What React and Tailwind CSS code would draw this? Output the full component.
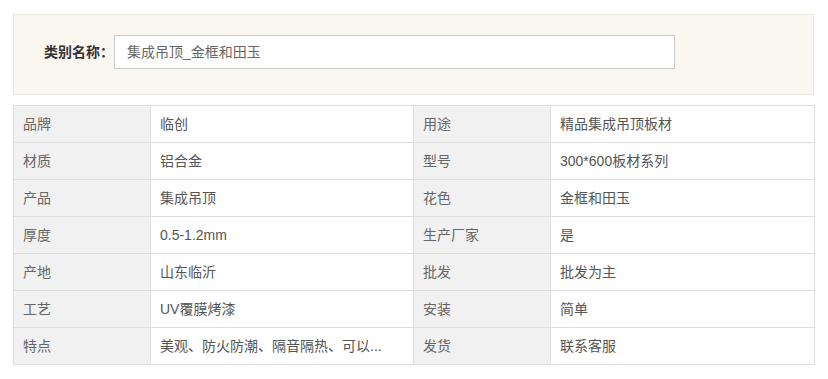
const rows = [
    ['品牌', '临创', '用途', '精品集成吊顶板材'],
    ['材质', '铝合金', '型号', '300*600板材系列'],
    ['产品', '集成吊顶', '花色', '金框和田玉'],
    ['厚度', '0.5-1.2mm', '生产厂家', '是'],
    ['产地', '山东临沂', '批发', '批发为主'],
    ['工艺', 'UV覆膜烤漆', '安装', '简单'],
    ['特点', '美观、防火防潮、隔音隔热、可以...', '发货', '联系客服'],
];

export default function App() {
    return (
        <div
            className="w-[828px] h-[379px] bg-white pt-[14px] pl-[13px] text-[14px]"
            style={{ fontFamily: '"Liberation Sans", "Noto Sans CJK SC", sans-serif' }}
        >
            <div className="w-[801px] border border-[#ebe6de] bg-[#faf7f1] pt-[20px] pb-[25px] pl-[30px] flex items-center">
                <span className="font-bold text-[#333] leading-none">类别名称：</span>
                <div className="w-[561px] h-[34px] border border-[#cccccc] bg-white flex items-center pl-[12px] text-[#666]">
                    集成吊顶_金框和田玉
                </div>
            </div>

            <table className="mt-[10px] w-[801px] border-collapse table-fixed">
                <colgroup>
                    <col className="w-[137px]" />
                    <col className="w-[263px]" />
                    <col className="w-[137px]" />
                    <col className="w-[264px]" />
                </colgroup>
                <tbody>
                    {rows.map((row) => (
                        <tr key={row[0]} className="h-[37px]">
                            <td className="border border-[#dedede] bg-[#f1f1f1] pl-[9px] text-[#666] p-0">{row[0]}</td>
                            <td className="border border-[#dedede] bg-white pl-[9px] text-[#555] p-0">{row[1]}</td>
                            <td className="border border-[#dedede] bg-[#f1f1f1] pl-[9px] text-[#666] p-0">{row[2]}</td>
                            <td className="border border-[#dedede] bg-white pl-[9px] text-[#555] p-0">{row[3]}</td>
                        </tr>
                    ))}
                </tbody>
            </table>
        </div>
    );
}
